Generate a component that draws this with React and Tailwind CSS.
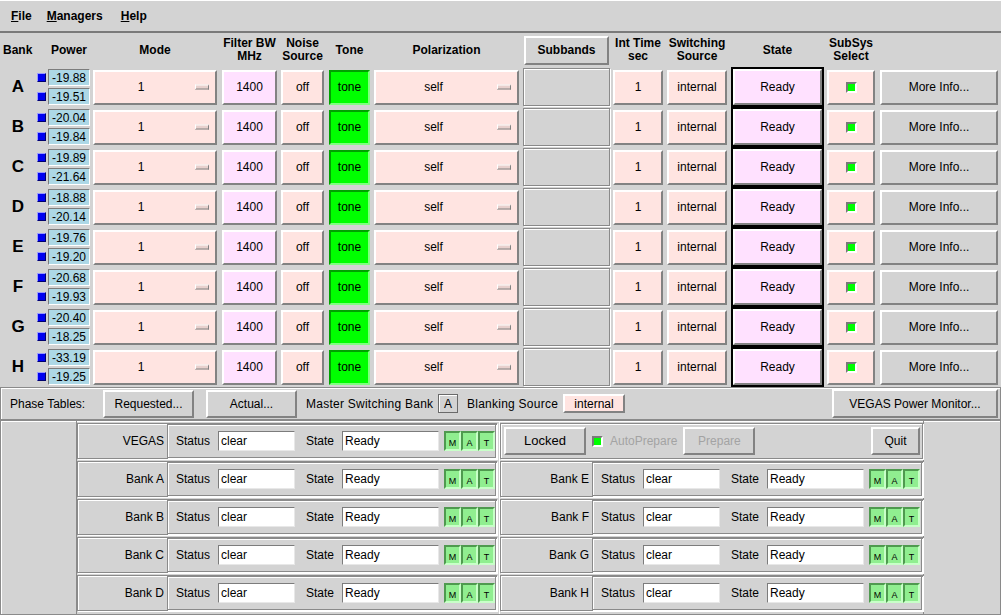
import React from "react";

const raised = "border-2 border-t-white border-l-white border-r-[#828282] border-b-[#828282]";
const etched = "border border-[#8a8a8a] shadow-[inset_1px_1px_0_white,1px_1px_0_white]";

const banks = [
  ["A", "-19.88", "-19.51"],
  ["B", "-20.04", "-19.84"],
  ["C", "-19.89", "-21.64"],
  ["D", "-18.88", "-20.14"],
  ["E", "-19.76", "-19.20"],
  ["F", "-20.68", "-19.93"],
  ["G", "-20.40", "-18.25"],
  ["H", "-33.19", "-19.25"],
];

function MenuItem({ label }) {
  return (
    <span className="font-bold">
      <span className="underline">{label[0]}</span>
      {label.slice(1)}
    </span>
  );
}

function OptionMark() {
  return <span className="absolute right-[6px] top-1/2 -translate-y-1/2 w-[14px] h-[5px] border border-t-white border-l-white border-r-[#828282] border-b-[#828282] bg-[#e8d0cd]" />;
}

function PowerBox({ value }) {
  return (
    <div className="flex items-center">
      <span className="w-[9px] h-[9px] bg-[#0000f0] border border-t-[#9a9aff] border-l-[#9a9aff] border-r-[#00006a] border-b-[#00006a]" />
      <span className="ml-[2px] w-[42px] h-[17px] flex items-center justify-center bg-[#add8e6] border border-t-[#7c7c7c] border-l-[#7c7c7c] border-r-white border-b-white text-[12px]">
        {value}
      </span>
    </div>
  );
}

function Cell({ className, children }) {
  return <div className={`h-[35px] flex items-center justify-center relative ${raised} ${className}`}>{children}</div>;
}

function BankRow({ bank }) {
  const [letter, p1, p2] = bank;
  return (
    <div className="flex items-center h-[40px]">
      <div className="w-[36px] text-center text-[17px] font-bold">{letter}</div>
      <div className="ml-[1px] flex flex-col gap-[2px]">
        <PowerBox value={p1} />
        <PowerBox value={p2} />
      </div>
      <Cell className="ml-[3px] w-[124px] bg-[#ffe4e1]">
        <span className="-ml-[28px]">1</span>
        <OptionMark />
      </Cell>
      <Cell className="ml-[5px] w-[55px] bg-[#ffe1ff]">1400</Cell>
      <Cell className="ml-[4px] w-[43px] bg-[#ffe4e1]">off</Cell>
      <div className="ml-[5px] w-[41px] h-[35px] flex items-center justify-center bg-[#00ff00] border-2 border-t-[#00a000] border-l-[#00a000] border-r-[#80ff80] border-b-[#80ff80]">tone</div>
      <Cell className="ml-[4px] w-[145px] bg-[#ffe4e1]">
        <span className="-ml-[26px]">self</span>
        <OptionMark />
      </Cell>
      <div className={`ml-[4px] w-[87px] h-[38px] bg-[#d3d3d3] ${etched}`} />
      <Cell className="ml-[3px] w-[50px] bg-[#ffe4e1]">1</Cell>
      <Cell className="ml-[4px] w-[60px] bg-[#ffe4e1]">internal</Cell>
      <div className="ml-[4px] w-[93px] h-[40px] border-2 border-black">
        <div className={`h-full flex items-center justify-center bg-[#ffe1ff] ${raised}`}>Ready</div>
      </div>
      <Cell className="ml-[3px] w-[48px] bg-[#ffe4e1]">
        <span className="w-[11px] h-[11px] bg-[#00ff00] border-2 border-t-[#7a7a7a] border-l-[#7a7a7a] border-r-white border-b-white" />
      </Cell>
      <div className={`ml-[5px] w-[118px] h-[35px] flex items-center justify-center bg-[#d3d3d3] ${raised}`}>More Info...</div>
    </div>
  );
}

function Mat() {
  return (
    <div className="flex h-[20px]">
      {["M", "A", "T"].map((c) => (
        <span
          key={c}
          className="w-[17px] h-full flex items-end justify-center pb-[1px] bg-[#90ee90] border-2 border-t-[#4f9a4f] border-l-[#4f9a4f] border-r-[#c8ffc8] border-b-[#c8ffc8] text-[9px] leading-none"
        >
          {c}
        </span>
      ))}
    </div>
  );
}

function Field({ value, w }) {
  return (
    <span className={`h-[20px] flex items-center pl-[2px] bg-white border border-t-[#7c7c7c] border-l-[#7c7c7c] border-r-[#e8e8e8] border-b-[#e8e8e8] ${w}`}>
      {value}
    </span>
  );
}

function StatusRow({ label }) {
  return (
    <div className={`h-[36px] flex ${etched}`}>
      <div className="w-[91px] flex items-center justify-end pr-[3px]">{label}</div>
      <div className={`flex-1 flex items-center ${etched}`}>
        <span className="ml-[8px] w-[42px]">Status</span>
        <Field value="clear" w="w-[77px]" />
        <span className="ml-[11px] w-[36px]">State</span>
        <Field value="Ready" w="w-[97px]" />
        <span className="ml-[5px]">
          <Mat />
        </span>
      </div>
    </div>
  );
}

export default function App() {
  return (
    <div className="w-[1001px] h-[615px] overflow-hidden bg-[#d3d3d3] text-black text-[12px] font-['Liberation_Sans',Arial,sans-serif]">
      <div className="h-[33px] flex items-center pl-[11px] border-t border-t-white border-b-2 border-b-[#7a7a7a]">
        <MenuItem label="File" />
        <span className="ml-[15px]"><MenuItem label="Managers" /></span>
        <span className="ml-[18px]"><MenuItem label="Help" /></span>
      </div>

      <div className="flex items-center h-[34px] font-bold leading-[13px] text-center">
        <div className="w-[36px] text-left pl-[3px]">Bank</div>
        <div className="ml-[1px] w-[53px] pl-[11px]">Power</div>
        <div className="ml-[3px] w-[124px]">Mode</div>
        <div className="ml-[5px] w-[55px]">Filter BW<br />MHz</div>
        <div className="ml-[4px] w-[43px]">Noise<br />Source</div>
        <div className="ml-[5px] w-[41px]">Tone</div>
        <div className="ml-[4px] w-[145px]">Polarization</div>
        <div className={`ml-[5px] w-[85px] h-[29px] flex items-center justify-center ${raised}`}>Subbands</div>
        <div className="ml-[4px] w-[50px]">Int Time<br />sec</div>
        <div className="ml-[4px] w-[60px]">Switching<br />Source</div>
        <div className="ml-[4px] w-[93px]">State</div>
        <div className="ml-[3px] w-[48px]">SubSys<br />Select</div>
      </div>

      <div>
        {banks.map((b) => (
          <BankRow key={b[0]} bank={b} />
        ))}
      </div>

      <div className={`h-[33px] flex items-center whitespace-nowrap ${etched}`}>
        <span className="ml-[9px] w-[93px]">Phase Tables:</span>
        <span className={`w-[91px] h-[28px] flex items-center justify-center ${raised}`}>Requested...</span>
        <span className={`ml-[12px] w-[91px] h-[28px] flex items-center justify-center ${raised}`}>Actual...</span>
        <span className="ml-[9px] w-[128px] tracking-[0.25px]">Master Switching Bank</span>
        <span className="ml-[4px] w-[20px] h-[19px] flex items-center justify-center border border-[#6a6a6a] shadow-[inset_1px_1px_0_white]">A</span>
        <span className="ml-[9px] w-[91px] tracking-[0.25px]">Blanking Source</span>
        <span className={`ml-[5px] w-[62px] h-[19px] flex items-center justify-center bg-[#ffe4e1] ${raised}`}>internal</span>
        <span className={`ml-auto mr-[2px] w-[166px] h-[29px] flex items-center justify-center ${raised}`}>VEGAS Power Monitor...</span>
      </div>

      <div className={`h-[195px] flex ${etched}`}>
        <div className="w-[76px] border-r border-r-[#8a8a8a]" />
        <div className="w-[423px] pr-[2px] pt-[2px] flex flex-col gap-[2px] border-r border-r-white">
          <StatusRow label="VEGAS" />
          {["A", "B", "C", "D"].map((c) => (
            <StatusRow key={c} label={`Bank ${c}`} />
          ))}
        </div>
        <div className="w-[424px] pt-[2px] flex flex-col gap-[2px] border-r border-r-[#8a8a8a]">
          <div className={`h-[36px] flex items-center ${etched}`}>
            <span className={`ml-[3px] w-[82px] h-[28px] flex items-center justify-center text-[13px] ${raised}`}>Locked</span>
            <span className="ml-[6px] w-[11px] h-[11px] bg-[#00ff00] border-2 border-t-[#7a7a7a] border-l-[#7a7a7a] border-r-white border-b-white" />
            <span className="ml-[7px] text-[#a3a3a3]">AutoPrepare</span>
            <span className={`ml-[6px] w-[72px] h-[28px] flex items-center justify-center text-[#a3a3a3] ${raised}`}>Prepare</span>
            <span className={`ml-auto mr-[2px] w-[49px] h-[28px] flex items-center justify-center ${raised}`}>Quit</span>
          </div>
          {["E", "F", "G", "H"].map((c) => (
            <StatusRow key={c} label={`Bank ${c}`} />
          ))}
        </div>
        <div className="flex-1" />
      </div>
    </div>
  );
}
